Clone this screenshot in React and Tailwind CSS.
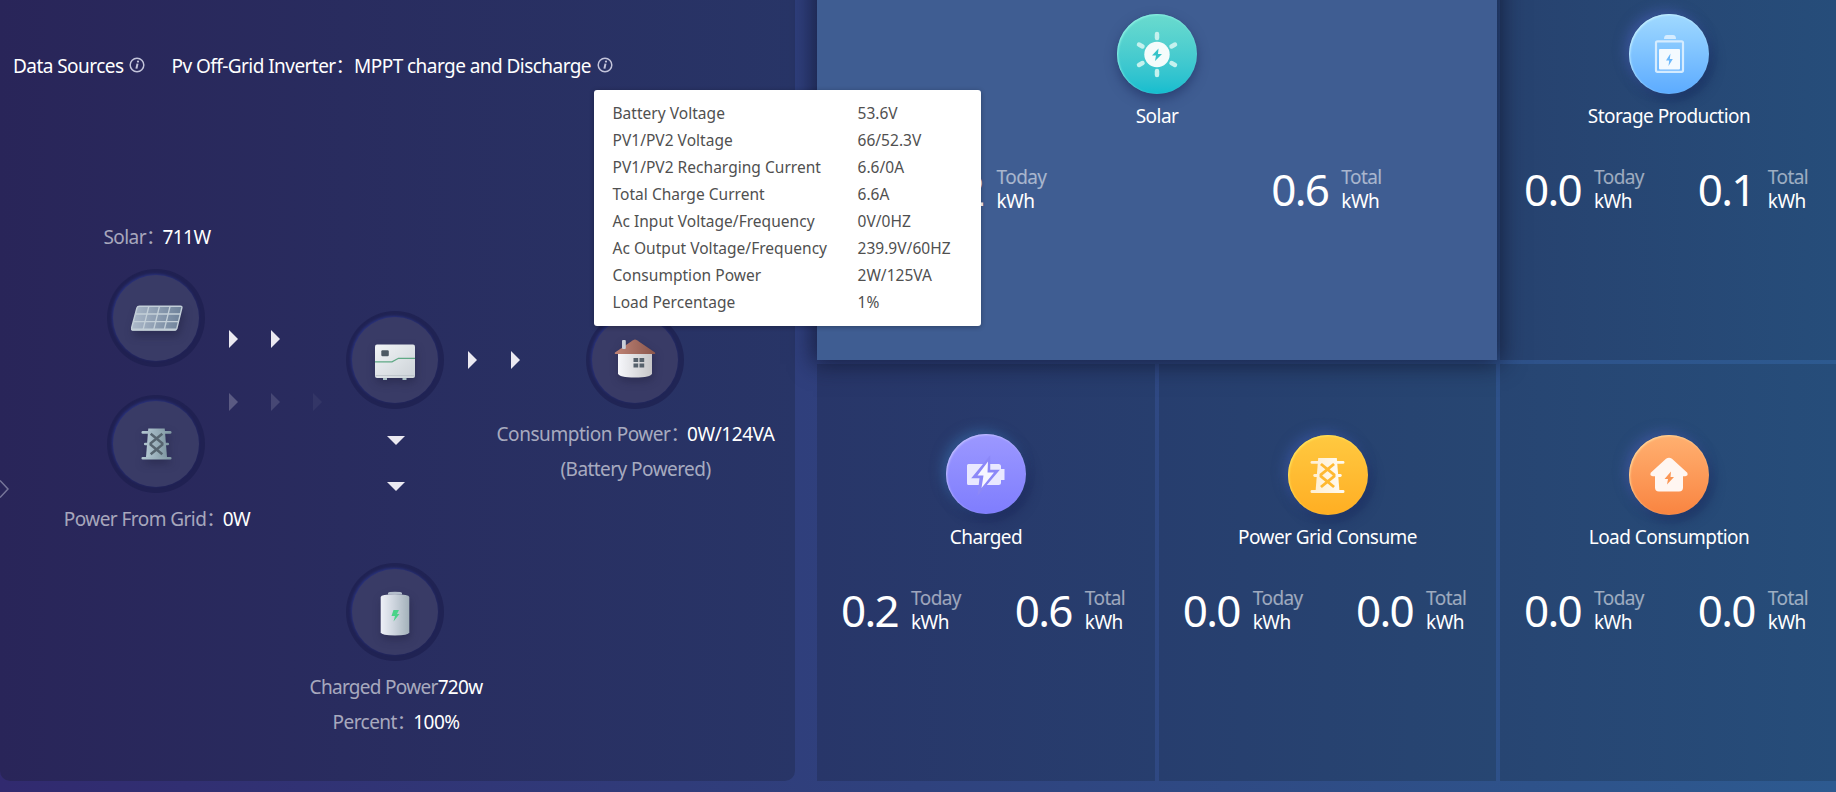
import React from 'react';
import { clsx } from 'clsx';

const READINGS = [
  ['Battery Voltage', '53.6V'],
  ['PV1/PV2 Voltage', '66/52.3V'],
  ['PV1/PV2 Recharging Current', '6.6/0A'],
  ['Total Charge Current', '6.6A'],
  ['Ac Input Voltage/Frequency', '0V/0HZ'],
  ['Ac Output Voltage/Frequency', '239.9V/60HZ'],
  ['Consumption Power', '2W/125VA'],
  ['Load Percentage', '1%'],
];

const InfoIcon = () => (
  <svg viewBox="0 0 16 16" className="size-4 shrink-0 -mt-0.5" fill="none" stroke="#c3c4da">
    <circle cx="8" cy="8" r="6.8" strokeWidth="1.5" />
    <path d="M8.5 6.6 7.4 11.6" strokeWidth="2" />
    <circle cx="9" cy="4.6" r="1.1" fill="#c3c4da" stroke="none" />
  </svg>
);

/* ---------- flow diagram ---------- */

const PanelIcon = () => (
  <svg viewBox="0 0 52 26" className="ml-0.5 w-[52px] h-[26px] drop-shadow-[2px_5px_4px_rgba(20,20,50,0.35)]">
    <defs>
      <linearGradient id="cells" x1="0" x2="1">
        <stop offset="0" stopColor="#adbaca" />
        <stop offset="1" stopColor="#6d8199" />
      </linearGradient>
    </defs>
    <path d="M8.5 1.2h41q1.8 0 1.3 1.8l-5 20.6q-.4 1.4-2 1.4h-42q-1.8 0-1.3-1.8L5.9 3q.5-1.8 2.6-1.8z" fill="url(#cells)" stroke="#c3cfd8" strokeWidth="1.4" />
    <path d="M17.8 1.5 12 25M28.4 1.5 22.6 25M39 1.5 33.2 25M4.5 9h45M2.6 16.6h45.2" stroke="#c3cfd8" strokeWidth="1.3" fill="none" />
    <path d="M1 24.6h44" stroke="#c3cfd8" strokeWidth="2" />
  </svg>
);

const TowerIcon = ({ id, from, to, cross, className }) => (
  <svg viewBox="0 0 32 33" className={className}>
    <defs>
      <linearGradient id={id} x1="0" x2="1">
        <stop offset="0" stopColor={from} />
        <stop offset="1" stopColor={to} />
      </linearGradient>
    </defs>
    <g fill={`url(#${id})`}>
      <path d="M7.500 .6h17l2.500 31.400H5z" />
      <rect x=".5" y="3.2" width="31" height="2.6" rx="1.3" />
      <rect x="3" y="15.2" width="26" height="2.6" rx="1.3" />
      <rect x=".5" y="29.8" width="31" height="2.8" rx="1.2" />
    </g>
    <path d="M10 6 22 15.800v1.400L10 27M22 6 10 15.800v1.400L22 27" fill="none" stroke={cross} strokeWidth="2.600" />
  </svg>
);

const InverterIcon = () => (
  <svg viewBox="0 0 40 37" className="w-10 h-[37px] mt-1 drop-shadow-[1px_4px_4px_rgba(20,20,50,0.35)]">
    <defs>
      <linearGradient id="inv" x1="0" x2="1" y1="0" y2="1">
        <stop offset="0" stopColor="#f1f4f6" />
        <stop offset="1" stopColor="#ccd2d7" />
      </linearGradient>
    </defs>
    <path d="M8 33h4v3H8zM27.500 33h4v3h-4z" fill="#a9bfc4" />
    <rect x="0" y="0.500" width="40" height="33.500" rx="2" fill="url(#inv)" />
    <path d="M.5 31.500h39" stroke="#b9c0c6" strokeWidth=".8" />
    <path d="M0 17.800h17l6.500-3.500H40" fill="none" stroke="#5fa985" strokeWidth="1.300" />
    <rect x="6.300" y="6.300" width="7.500" height="6" rx="1.200" fill="#4d5963" />
  </svg>
);

const HouseIcon = () => (
  <svg viewBox="0 0 42 39" className="w-[42px] h-[39px] -mt-1 drop-shadow-[1px_4px_4px_rgba(20,20,50,0.35)]">
    <defs>
      <linearGradient id="wall" x1="0" x2="1">
        <stop offset="0" stopColor="#f6f7fb" />
        <stop offset="1" stopColor="#c6c6c8" />
      </linearGradient>
      <linearGradient id="roof" x1="0" x2="1">
        <stop offset="0" stopColor="#c08476" />
        <stop offset="1" stopColor="#8a564c" />
      </linearGradient>
    </defs>
    <path d="M4 14h34v20.500Q37 38.500 21 38.500T4 34.500z" fill="url(#wall)" />
    <path d="M19 1.200q2-1.200 4 0l18 12.300q1 1.500-1.500 1.500h-37q-2.500 0-1.500-1.500z" fill="url(#roof)" />
    <rect x="8" y="1" width="3.800" height="9" rx="1" fill="#c9ced8" />
    <path d="M19.500 19h4.700v4h-4.700zM25.500 19h4.700v4h-4.700zM19.500 24.400h4.700v4h-4.700zM25.500 24.400h4.700v4h-4.700z" fill="#56616c" />
  </svg>
);

const TankIcon = () => (
  <svg viewBox="0 0 30 45" className="w-[30px] h-[45px] mt-0.5 drop-shadow-[1px_4px_4px_rgba(20,20,50,0.35)]">
    <defs>
      <linearGradient id="tank" x1="0" x2="1">
        <stop offset="0" stopColor="#eef0f7" />
        <stop offset=".45" stopColor="#ced5de" />
        <stop offset="1" stopColor="#a3b1ba" />
      </linearGradient>
    </defs>
    <path d="M8 3.500V2Q8 .8 15 .8T22 2v1.500z" fill="#b4becb" />
    <path d="M.7 6Q1 3.200 15 3.200T29.300 6v35.500Q28.500 44.500 15 44.500T.7 41.500z" fill="url(#tank)" />
    <path d="M13.500 19h5.500l-2 4h2.500l-6 7.500 1.500-5.500h-3.500z" fill="#4bd388" />
  </svg>
);

const Node = ({ className, children }) => (
  <div
    className={clsx(
      'absolute size-[98px] rounded-full flex items-center justify-center bg-[#1a1c4b]/60',
      className
    )}
  >
    <div className="size-[86px] rounded-full flex items-center justify-center bg-[#393b66] shadow-[-1px_-1px_3px_#2b3480]">
      {children}
    </div>
  </div>
);

const Label = ({ className, children }) => (
  <div className={clsx('absolute -translate-x-1/2 text-center whitespace-nowrap leading-[35px] text-white/60', className)}>
    {children}
  </div>
);

const Value = ({ children }) => <b className="-ml-0.5 font-normal text-white">{children}</b>;

const Arrow = ({ down, className }) => (
  <svg
    viewBox={down ? '0 0 18 9' : '0 0 9 18'}
    className={clsx('absolute fill-[#ebe9f1]', down ? 'w-[18px] h-[9px]' : 'w-[9px] h-[18px]', className)}
  >
    <path d={down ? 'M0 0h18L9 9z' : 'M0 0v18l9-9z'} />
  </svg>
);

const FlowPanel = () => (
  <section className="relative w-[795px] h-[781px] shrink-0 rounded-b-[10px] bg-linear-to-r from-[#292559] to-[#283567] text-white">
    <header className="flex items-center pt-[53px] pl-[13px] leading-[26px] whitespace-nowrap">
      <span className="mr-[6px]">Data Sources</span>
      <InfoIcon />
      <span className="ml-[26px] mr-[6px] -mt-px">Pv Off-Grid Inverter：MPPT charge and Discharge</span>
      <InfoIcon />
    </header>

    <Label className="left-[157px] top-[220px]">Solar：<Value>711W</Value></Label>
    <Node className="left-[107px] top-[269px]"><PanelIcon /></Node>
    <Node className="left-[107px] top-[395px]">
      <TowerIcon id="tower" from="#b3c7d2" to="#7f97a2" cross="#56646f" className="w-[31px] h-8 drop-shadow-[1px_4px_4px_rgba(20,20,50,0.35)]" />
    </Node>
    <Label className="left-[157px] top-[502px]">Power From Grid：<Value>0W</Value></Label>

    <Arrow className="left-[229px] top-[330px]" />
    <Arrow className="left-[271px] top-[330px]" />
    <Arrow className="left-[229px] top-[393px] opacity-25" />
    <Arrow className="left-[271px] top-[393px] opacity-15" />
    <Arrow className="left-[313px] top-[393px] opacity-5" />

    <Node className="left-[346px] top-[311px]"><InverterIcon /></Node>
    <Arrow className="left-[468px] top-[351px]" />
    <Arrow className="left-[511px] top-[351px]" />
    <Arrow down className="left-[387px] top-[436px]" />
    <Arrow down className="left-[387px] top-[482px]" />

    <Node className="left-[586px] top-[311px]"><HouseIcon /></Node>
    <Label className="left-[635.5px] top-[417px]">
      <p className="tracking-[-0.450px]">Consumption Power：<Value>0W/124VA</Value></p>
      <p>(Battery Powered)</p>
    </Label>

    <Node className="left-[346px] top-[563px]"><TankIcon /></Node>
    <Label className="left-[396px] top-[670px]">
      <p className="tracking-[-0.7px]">Charged Power<b className="font-normal text-white">720w</b></p>
      <p>Percent：<Value>100%</Value></p>
    </Label>

    <svg viewBox="0 0 9 18" className="absolute left-0 top-[480px] w-[9px] h-[18px]" fill="none" stroke="#77769a" strokeWidth="1.500">
      <path d="M0 .5 8 9l-8 8.500" />
    </svg>
  </section>
);

/* ---------- statistics cards ---------- */

const SunGlyph = () => (
  <svg viewBox="0 0 80 80" className="size-20">
    <g stroke="#c4f1ee" strokeWidth="4.500" strokeLinecap="round">
      <path d="M40 20v4M40 57v4M22 30.500l3.500 2M54.500 49l3.500 2M22 51l3.500-2M54.500 32.500l3.500-2" />
    </g>
    <circle cx="40" cy="40.500" r="12.700" fill="#f4fcfb" />
    <path d="M41.500 34.500 35 41.500h4l-1 5.500 7-7h-4z" fill="#35c4c9" />
  </svg>
);

const StorageGlyph = () => (
  <svg viewBox="0 0 80 80" className="size-20">
    <path d="M35 25q0-4 3-4h6q3 0 3 4z" fill="#d5ecff" />
    <rect x="27" y="27.300" width="27" height="30.500" rx="1.500" fill="none" stroke="#d5ecff" strokeWidth="2.200" />
    <rect x="30" y="35" width="21" height="20.500" rx="1" fill="#f4faff" />
    <path d="M41.500 39.500 37 46.500h3.200L39.500 52l4.300-7h-3z" fill="#6cb8fb" />
  </svg>
);

const ChargeGlyph = () => (
  <svg viewBox="0 0 80 80" className="size-20">
    <path d="M22.500 30h30q2.500 0 2.500 2.500V35h3.500v11H55v2.500q0 2.500-2.500 2.500h-30q-1.500 0-1.500-1.500v-18q0-1.500 1.500-1.500z" fill="#e9e8ff" />
    <path d="M42 27.500 30 42h6l-1.500 13L49 38h-7z" fill="#f7f6ff" stroke="#8c88f8" strokeWidth="4.500" />
    <path d="M42 27.500 31.500 41.500h6L35.500 54 48 38.500h-6.500z" fill="#f7f6ff" />
  </svg>
);

const HomeGlyph = () => (
  <svg viewBox="0 0 80 80" className="size-20">
    <path d="M37 23.800q3-2.300 6 0l15.300 14q1.200 3.200-2 3.400H54v11.300q0 4-4 4H30q-4 0-4-4V41.200h-2.300q-3.200-.2-2-3.400z" fill="#fff6f1" />
    <path d="M42 36.500 35.500 44H39l-1 5.500 7-7.500h-3.500z" fill="#fb9553" />
  </svg>
);

const CARDS = [
  {
    title: 'Solar', today: '0.2', total: '0.6',
    cell: 'relative col-span-2 -mr-px bg-[#3f5d92] shadow-[0_0_22px_4px_rgba(15,20,45,0.75)]',
    disc: 'mt-px from-[#6adbce] to-[#12bdcf] shadow-[0_5px_12px_rgba(25,40,90,0.55),inset_1px_1px_2px_#8cf0e4]',
    glyph: <SunGlyph />,
  },
  {
    title: 'Storage Production', today: '0.0', total: '0.1',
    cell: 'bg-linear-to-r from-[#27426f] to-[#264d7a]',
    disc: 'mt-px from-[#a0d9ff] to-[#5cabff] shadow-[-4px_-4px_12px_rgba(75,100,190,0.5),4px_6px_12px_rgba(20,40,90,0.6),inset_1px_1px_2px_#c5f0ff]',
    glyph: <StorageGlyph />,
  },
  {
    title: 'Charged', today: '0.2', total: '0.6',
    cell: 'bg-linear-to-r from-[#283669] to-[#273e6e]',
    disc: 'from-[#9c98ff] to-[#7f7dfd] shadow-[-4px_-4px_12px_rgba(60,115,180,0.5),4px_6px_12px_rgba(25,35,85,0.6),inset_1px_1px_2px_#c2bfff]',
    glyph: <ChargeGlyph />,
  },
  {
    title: 'Power Grid Consume', today: '0.0', total: '0.0',
    cell: 'bg-linear-to-r from-[#273e6e] to-[#274672]',
    disc: 'mt-px from-[#ffc940] to-[#ffae22] shadow-[-4px_-4px_12px_rgba(65,95,180,0.5),4px_6px_12px_rgba(25,40,90,0.6),inset_1px_1px_2px_#ffe45c]',
    glyph: <TowerIcon id="pylon" from="#ffefd2" to="#fffaf0" cross="#ffb931" className="w-[35px] h-[37px]" />,
  },
  {
    title: 'Load Consumption', today: '0.0', total: '0.0',
    cell: 'bg-linear-to-r from-[#274572] to-[#264d7a]',
    disc: 'mt-px from-[#ffb070] to-[#f98440] shadow-[-4px_-4px_12px_rgba(75,95,180,0.5),4px_6px_12px_rgba(25,40,90,0.6),inset_1px_1px_2px_#ffd79a]',
    glyph: <HomeGlyph />,
  },
];

const Stat = ({ value, label }) => (
  <div className="flex-1 flex items-center justify-center gap-[13px] pr-px">
    <span className="text-[44px] leading-[48px] tracking-[-1.700px]">{value}</span>
    <div className="leading-6">
      <p className="text-white/55">{label}</p>
      <p>kWh</p>
    </div>
  </div>
);

const Card = ({ title, today, total, cell, disc, glyph }) => (
  <div className={clsx('h-[417px] pt-[70px] text-white', cell)}>
    <div className="h-20 flex justify-center">
      <div className={clsx('size-20 shrink-0 rounded-full flex items-center justify-center bg-linear-to-b', disc)}>
        {glyph}
      </div>
    </div>
    <h3 className="mt-[9px] text-center leading-7">{title}</h3>
    <div className="flex mt-[35px]">
      <Stat value={today} label="Today" />
      <Stat value={total} label="Total" />
    </div>
  </div>
);

export default function App() {
  return (
    <main className="relative flex w-[1836px] h-[792px] overflow-hidden bg-linear-to-r from-[#312a6f] via-[#2f427e] to-[#2d5a90] font-['Noto_Sans','Noto_Sans_CJK_SC',sans-serif] text-[19px] tracking-[-0.550px]">
      <FlowPanel />

      {/* first row is scrolled partly out of view */}
      <section className="grid grid-cols-[338px_337px_338px] gap-1 ml-[22px] -mt-[57px] h-[838px] shrink-0">
        {CARDS.map((card) => (
          <Card key={card.title} {...card} />
        ))}
      </section>

      <div className="absolute left-[594px] top-[90px] w-[387px] h-[236px] rounded-[3px] bg-white py-2.5 pl-[18.500px] shadow-[0_1px_5px_rgba(0,0,0,0.3)] text-[15.500px] leading-[27px] tracking-[0.030px] text-[#505050]">
        {READINGS.map(([name, value]) => (
          <div key={name} className="flex">
            <span className="w-[245px]">{name}</span>
            <span>{value}</span>
          </div>
        ))}
      </div>
    </main>
  );
}
